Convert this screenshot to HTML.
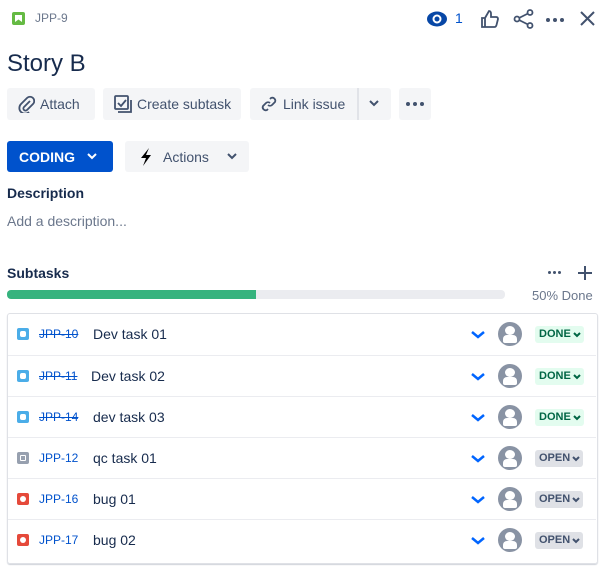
<!DOCTYPE html><html><head><style>
body{margin:0;width:606px;height:573px;background:#fff;font-family:"Liberation Sans",sans-serif;color:#172b4d;position:relative;overflow:hidden}
.a{position:absolute}
.btn{position:absolute;background:#f4f5f7;border-radius:3px;height:32px;font-size:14px;color:#42526e;display:flex;align-items:center;box-sizing:border-box}
.row{position:absolute;left:8px;width:588px;height:41px;border-top:1px solid #ebecf0}
.row .ic{position:absolute;left:9px;top:14px;width:12px;height:12px;border-radius:2px}
.row .ic i{position:absolute;left:3px;top:3px;width:6px;height:6px;border-radius:50%;background:#fff}
.row .k{position:absolute;left:31px;top:13px;font-size:12px;color:#0052cc}
.row .t{position:absolute;left:85px;top:12px;font-size:14px;color:#172b4d}
.row .chev{position:absolute;left:463px;top:13px}
.row .av{position:absolute;left:490px;top:8px;width:24px;height:24px;border-radius:50%;background:#8993a4;overflow:hidden}
.row .av:before{content:"";position:absolute;left:7px;top:4px;width:10px;height:9px;border-radius:50%;background:#fff}
.row .av:after{content:"";position:absolute;left:5px;top:13px;width:14px;height:8px;border-radius:4px 4px 2px 2px;background:#fff}
.row .st{position:absolute;left:527px;top:12px;height:17px;border-radius:3px;font-size:11px;font-weight:bold;padding:0 3px 0 4px;line-height:17px;display:flex;align-items:center}
.row .st svg{margin-left:2px}
.done{background:#e3fcef;color:#006644}.open{background:#dfe1e6;color:#42526e}
.dots{position:absolute;display:flex;gap:3px}.dots b{width:4px;height:4px;border-radius:50%;background:#42526e}
</style></head><body>
<div class="a" style="left:12px;top:12px;width:13px;height:13px;background:#65ba43;border-radius:2px"><svg style="position:absolute;left:3px;top:3px" width="7" height="7"><path d="M0 0h7v7L3.5 4.5 0 7z" fill="#fff"/></svg></div>
<div class="a" style="left:35px;top:11px;font-size:12px;color:#6b778c">JPP-9</div>
<svg class="a" style="left:426px;top:11px" width="22" height="16"><ellipse cx="11" cy="8" rx="10" ry="7.5" fill="#0747a6"/><circle cx="11" cy="8" r="3.5" fill="none" stroke="#fff" stroke-width="2"/></svg>
<div class="a" style="left:455px;top:10px;font-size:14px;color:#0052cc">1</div>
<svg class="a" style="left:480px;top:9px" width="20" height="20" fill="none" stroke="#42526e" stroke-width="1.8"><path d="M2 9h3v9H2zM5 9l4-7c2 0 2 2 2 3v3h5c1.5 0 2 1 2 2l-1.5 6c-.3 1-1 2-2 2H5"/></svg>
<svg class="a" style="left:513px;top:9px" width="22" height="20" fill="none" stroke="#42526e" stroke-width="1.8"><circle cx="4" cy="10" r="2.5"/><circle cx="17" cy="3.5" r="2.5"/><circle cx="17" cy="16.5" r="2.5"/><path d="M6 9l9-4.5M6 11l9 4.5"/></svg>
<div class="dots" style="left:546px;top:18px"><b></b><b></b><b></b></div>
<svg class="a" style="left:580px;top:11px" width="15" height="15" stroke="#42526e" stroke-width="2"><path d="M1 1l13 13M14 1L1 14"/></svg>
<div class="a" style="left:7px;top:50px;font-size:24px;color:#172b4d">Story B</div>
<div class="btn" style="left:7px;top:88px;width:88px;padding-left:10px"><svg width="18" height="18" fill="none" stroke="#42526e" stroke-width="1.8"><path d="M13 6l-6 6a2 2 0 003 3l6-6a4 4 0 00-6-6L4 9a5.5 5.5 0 008 8"/></svg><span style="margin-left:5px">Attach</span></div>
<div class="btn" style="left:103px;top:88px;width:138px;padding-left:11px"><svg width="18" height="18" fill="none" stroke="#42526e" stroke-width="1.8"><rect x="1" y="1" width="13" height="13" rx="1"/><path d="M4 8l3 3 5-6M4 17h13V5"/></svg><span style="margin-left:5px">Create subtask</span></div>
<div class="btn" style="left:250px;top:88px;width:141px;padding-left:10px"><svg width="18" height="18" fill="none" stroke="#42526e" stroke-width="1.8"><path d="M8 10a3 3 0 004 0l3-3a3 3 0 00-4-4l-1 1M10 8a3 3 0 00-4 0l-3 3a3 3 0 004 4l1-1"/></svg><span style="margin-left:5px">Link issue</span><div style="position:absolute;left:107px;top:0;width:2px;height:32px;background:#e1e3e8"></div><svg style="position:absolute;left:119px;top:12px" width="10" height="8" fill="none" stroke="#42526e" stroke-width="2"><path d="M1 1l4 4 4-4"/></svg></div>
<div class="btn" style="left:399px;top:88px;width:32px;justify-content:center"><div class="dots" style="position:static"><b></b><b></b><b></b></div></div>
<div class="btn" style="left:7px;top:141px;width:106px;height:31px;background:#0052cc;color:#fff;font-weight:bold;padding-left:12px">CODING<svg style="margin-left:12px" width="10" height="8" fill="none" stroke="#fff" stroke-width="2"><path d="M1 1l4 4 4-4"/></svg></div>
<div class="btn" style="left:125px;top:141px;width:124px;height:31px;padding-left:14px"><svg width="14" height="18"><path d="M10 0L2 10h5l-3 8 8-11H7z" fill="#000"/></svg><span style="margin-left:10px">Actions</span><svg style="margin-left:18px" width="10" height="8" fill="none" stroke="#42526e" stroke-width="2"><path d="M1 1l4 4 4-4"/></svg></div>
<div class="a" style="left:7px;top:185px;font-size:14px;font-weight:bold;color:#172b4d">Description</div>
<div class="a" style="left:7px;top:213px;font-size:14px;color:#6b778c">Add a description...</div>
<div class="a" style="left:7px;top:265px;font-size:14px;font-weight:bold">Subtasks</div>
<div class="dots" style="left:548px;top:271px;gap:2px"><b style="width:3px;height:3px"></b><b style="width:3px;height:3px"></b><b style="width:3px;height:3px"></b></div>
<svg class="a" style="left:578px;top:266px" width="14" height="14" stroke="#42526e" stroke-width="2"><path d="M7 0v14M0 7h14"/></svg>
<div class="a" style="left:7px;top:290px;width:498px;height:9px;border-radius:4px;background:#ebecf0"><div style="width:249px;height:9px;background:#36b37e;border-radius:4px 0 0 4px"></div></div>
<div class="a" style="left:532px;top:288px;font-size:13px;color:#6b778c">50% Done</div>
<div class="a" style="left:7px;top:313px;width:589px;height:249px;border:1px solid #dfe1e6;border-radius:3px;box-shadow:0 1px 1px rgba(9,30,66,.2)"></div>
<div class="row" style="top:314px;border-top:none"><div class="ic" style="background:#4bade8"><i style="border-radius:2px"></i></div><div class="k"><s>JPP-10</s></div><div class="t">Dev task 01</div><svg class="chev" width="14" height="14" fill="none" stroke="#0065ff" stroke-width="2.5"><path d="M1 5l6 5 6-5"/></svg><div class="av"></div><div class="st done">DONE<svg width="8" height="6" fill="none" stroke="#006644" stroke-width="2"><path d="M1 1l3 3 3-3"/></svg></div></div>
<div class="row" style="top:355px"><div class="ic" style="background:#4bade8"><i style="border-radius:2px"></i></div><div class="k"><s>JPP-11</s></div><div class="t" style="left:83px">Dev task 02</div><svg class="chev" width="14" height="14" fill="none" stroke="#0065ff" stroke-width="2.5"><path d="M1 5l6 5 6-5"/></svg><div class="av"></div><div class="st done">DONE<svg width="8" height="6" fill="none" stroke="#006644" stroke-width="2"><path d="M1 1l3 3 3-3"/></svg></div></div>
<div class="row" style="top:396px"><div class="ic" style="background:#4bade8"><i style="border-radius:2px"></i></div><div class="k"><s>JPP-14</s></div><div class="t">dev task 03</div><svg class="chev" width="14" height="14" fill="none" stroke="#0065ff" stroke-width="2.5"><path d="M1 5l6 5 6-5"/></svg><div class="av"></div><div class="st done">DONE<svg width="8" height="6" fill="none" stroke="#006644" stroke-width="2"><path d="M1 1l3 3 3-3"/></svg></div></div>
<div class="row" style="top:437px"><div class="ic" style="background:#97a0af"><i style="border-radius:1px;background:none;border:1.5px solid #fff;width:4px;height:4px"></i></div><div class="k">JPP-12</div><div class="t">qc task 01</div><svg class="chev" width="14" height="14" fill="none" stroke="#0065ff" stroke-width="2.5"><path d="M1 5l6 5 6-5"/></svg><div class="av"></div><div class="st open">OPEN<svg width="8" height="6" fill="none" stroke="#42526e" stroke-width="2"><path d="M1 1l3 3 3-3"/></svg></div></div>
<div class="row" style="top:478px"><div class="ic" style="background:#e5493a"><i></i></div><div class="k">JPP-16</div><div class="t">bug 01</div><svg class="chev" width="14" height="14" fill="none" stroke="#0065ff" stroke-width="2.5"><path d="M1 5l6 5 6-5"/></svg><div class="av"></div><div class="st open">OPEN<svg width="8" height="6" fill="none" stroke="#42526e" stroke-width="2"><path d="M1 1l3 3 3-3"/></svg></div></div>
<div class="row" style="top:519px"><div class="ic" style="background:#e5493a"><i></i></div><div class="k">JPP-17</div><div class="t">bug 02</div><svg class="chev" width="14" height="14" fill="none" stroke="#0065ff" stroke-width="2.5"><path d="M1 5l6 5 6-5"/></svg><div class="av"></div><div class="st open">OPEN<svg width="8" height="6" fill="none" stroke="#42526e" stroke-width="2"><path d="M1 1l3 3 3-3"/></svg></div></div>
</body></html>
